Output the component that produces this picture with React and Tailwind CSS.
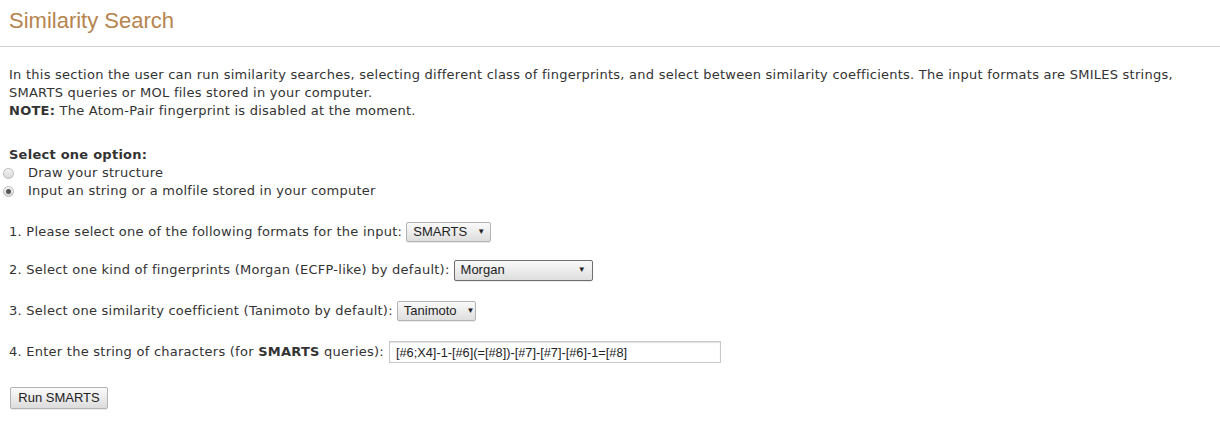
const BODY_FONT = "font-['DejaVu_Sans',Verdana,sans-serif]"

function FakeSelect({ label, width, tall = false, focused = false }) {
  return (
    <span
      className={`ml-[4px] inline-flex items-center rounded-[2px] border bg-gradient-to-b from-[#fafafa] to-[#dedede] pl-[6px] pr-[6px] font-['Liberation_Sans',Arial,sans-serif] text-[13px] tracking-normal text-[#222] shadow-[0_1px_0_rgba(0,0,0,0.08)] ${
        tall ? "h-[21px] justify-between" : "h-[20px] gap-[10px]"
      } ${focused ? "border-[#6f6f6f]" : "border-[#b3b3b3]"}`}
      style={{ width }}
    >
      <span>{label}</span>
      <span className="text-[8px] leading-none">▼</span>
    </span>
  )
}

function Radio({ checked }) {
  return (
    <span className="mr-[14px] inline-flex h-[11px] w-[11px] items-center justify-center rounded-full border border-[#b9b9b9] bg-gradient-to-b from-[#f4f4f4] to-[#d9d9d9]">
      {checked && <span className="h-[5px] w-[5px] rounded-full bg-[#555]" />}
    </span>
  )
}

export default function App() {
  return (
    <div className={`min-h-[429px] w-[1220px] bg-white text-[#333] ${BODY_FONT}`}>
      <div className="border-b border-[#cfcfcf] px-[9px] pb-[12px] pt-[8px]">
        <h2 className="font-['Liberation_Sans',Helvetica,Arial,sans-serif] text-[22px] leading-[26px] text-[#b5844f]">
          Similarity Search
        </h2>
      </div>

      <div className="px-[9px] text-[13px] leading-[18px] tracking-[0.25px]">
        <p className="mt-[19px]">
          In this section the user can run similarity searches, selecting different class of fingerprints, and select between similarity coefficients. The input formats are SMILES strings,
          <br />
          SMARTS queries or MOL files stored in your computer.
          <br />
          <b>NOTE:</b> The Atom-Pair fingerprint is disabled at the moment.
        </p>

        <div className="mt-[26px]">
          <p className="font-bold">Select one option:</p>
          <label className="-ml-[6px] flex items-center">
            <Radio />
            Draw your structure
          </label>
          <label className="-ml-[6px] flex items-center">
            <Radio checked />
            Input an string or a molfile stored in your computer
          </label>
        </div>

        <div className="mt-[21px] flex h-[22px] items-center">
          1. Please select one of the following formats for the input:
          <FakeSelect label="SMARTS" width={85} />
        </div>

        <div className="mt-[16px] flex h-[22px] items-center">
          2. Select one kind of fingerprints (Morgan (ECFP-like) by default):
          <FakeSelect label="Morgan" width={139} tall focused />
        </div>

        <div className="mt-[19px] flex h-[22px] items-center">
          3. Select one similarity coefficient (Tanimoto by default):
          <FakeSelect label="Tanimoto" width={79} />
        </div>

        <div className="mt-[19px] flex h-[22px] items-center">
          <span>
            4. Enter the string of characters (for <b>SMARTS</b> queries):
          </span>
          <input
            type="text"
            readOnly
            value="[#6;X4]-1-[#6](=[#8])-[#7]-[#7]-[#6]-1=[#8]"
            className="ml-[5px] h-[22px] w-[332px] border border-[#c8c8c8] px-[6px] font-['Liberation_Sans',Arial,sans-serif] text-[12.75px] tracking-normal text-[#222] shadow-[inset_0_1px_1px_rgba(0,0,0,0.12)] outline-none"
          />
        </div>

        <button
          type="button"
          className="mt-[24px] ml-[1px] h-[22px] w-[98px] rounded-[2px] border border-[#b3b3b3] bg-gradient-to-b from-[#fafafa] to-[#dcdcdc] font-['Liberation_Sans',Arial,sans-serif] text-[13px] tracking-normal text-[#222] shadow-[0_1px_0_rgba(0,0,0,0.08)]"
        >
          Run SMARTS
        </button>
      </div>
    </div>
  )
}
